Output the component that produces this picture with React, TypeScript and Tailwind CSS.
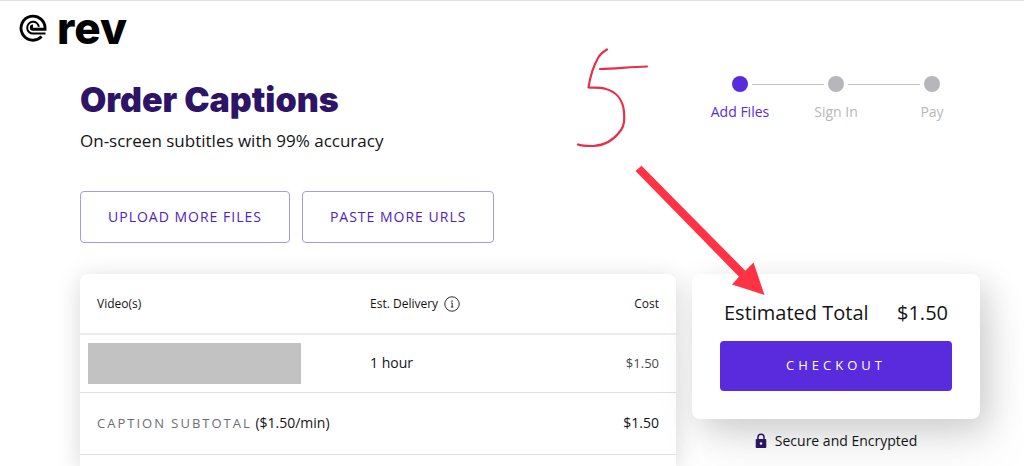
const STEPS = [
  { label: 'Add Files', active: true },
  { label: 'Sign In', active: false },
  { label: 'Pay', active: false },
];

function Logo() {
  return (
    <a href="#" className="flex items-center gap-2.5 text-black" aria-label="rev">
      <svg viewBox="0 0 28 28" className="size-7" fill="none" stroke="currentColor" aria-hidden="true">
        <path d="M22.6 22.6A12 12 0 1 1 26 15.200H13.800A1.600 1.600 0 0 1 14 12" strokeWidth="2.900" />
        <path d="M26.500 19.600H14A5.900 5.900 0 1 1 19.900 12.800" strokeWidth="2" />
      </svg>
      <span className="font-['Inter',sans-serif] text-[44px] leading-10 font-extrabold">rev</span>
    </a>
  );
}

function Stepper() {
  return (
    <ol className="grid w-72 shrink-0 grid-cols-3 pt-1">
      {STEPS.map((step, i) => (
        <li key={step.label} className={step.active ? 'text-[#5a2bdc]' : 'text-[#b7b7bb]'}>
          <div className="flex items-center gap-1">
            <span className={i === 0 ? 'h-px flex-1' : 'h-px flex-1 bg-[#c4c4c6]'} />
            <span className="size-4 rounded-full bg-current" />
            <span className={i === STEPS.length - 1 ? 'h-px flex-1' : 'h-px flex-1 bg-[#c4c4c6]'} />
          </div>
          <p className="mt-2 text-center text-sm leading-6">{step.label}</p>
        </li>
      ))}
    </ol>
  );
}

function InfoIcon() {
  return (
    <svg viewBox="0 0 16 16" className="size-4" fill="none" stroke="currentColor" aria-hidden="true">
      <circle cx="8" cy="8" r="7.2" strokeWidth="0.9" />
      <path d="M7.200 7h1v4M6.900 11h2.400" strokeWidth="0.9" />
      <path d="M8 4.500v1.300" strokeWidth="1.200" />
    </svg>
  );
}

function LockIcon() {
  return (
    <svg viewBox="0 0 12 16" className="h-4 w-3 text-[#2b1464]" aria-hidden="true">
      <path d="M3 7V4.200a3 3 0 0 1 6 0V7" fill="none" stroke="currentColor" strokeWidth="1.500" />
      <path d="M1.500 6h9a.8.8 0 0 1 .8.8v7.400a.8.8 0 0 1-.8.8h-9a.8.8 0 0 1-.8-.8V6.800a.8.8 0 0 1 .8-.8z" fill="currentColor" />
      <circle cx="6" cy="10.500" r="1.200" fill="white" />
    </svg>
  );
}

// Hand-drawn step number and the arrow to the total
function Annotation() {
  return (
    <svg
      viewBox="570 40 210 270"
      className="pointer-events-none absolute top-[39px] left-[570px] z-10 h-[270px] w-[210px]"
      fill="none"
      aria-hidden="true"
    >
      <g stroke="#e5304a" strokeWidth="2.200" strokeLinecap="round" strokeLinejoin="round">
        <path d="M607 49.500C603 52 600 54 598 58C593 67 590 77 588.500 87.500C594 88 600 87 606 89C617 92 623 101 624 112C624.500 120 624.500 125 621 130C614 140 604 145.500 593 146C587 146 581 146 578 144.500" />
        <path d="M600 69C616 68.500 630 67 647 66.500" />
      </g>
      <path d="M635.500 171L641.500 165.800L745.300 270.700L753.500 262.500L764.500 295L732 284.500L739 276.700Z" fill="#ff3344" />
    </svg>
  );
}

function OrderTable() {
  return (
    <section className="flex-1 rounded-t-lg bg-white shadow-[0_4px_24px_rgba(0,0,0,0.16)]">
      <table className="w-full table-fixed border-collapse text-left">
        <thead>
          <tr className="h-[60px] border-b-2 border-[#ececec] text-xs">
            <th className="w-[290px] pl-[17px] font-medium">Video(s)</th>
            <th className="font-medium">
              <span className="flex items-center gap-1.5">
                Est. Delivery
                <InfoIcon />
              </span>
            </th>
            <th className="pr-[17px] text-right font-medium">Cost</th>
          </tr>
        </thead>
        <tbody>
          <tr className="h-[58px] border-b border-[#e0e0e0] text-sm">
            <td className="pl-2">
              <div className="h-[41px] w-[213px] bg-[#c2c2c2]" />
            </td>
            <td>1 hour</td>
            <td className="pr-[17px] text-right text-[13px] text-[#4a4a4e]">$1.50</td>
          </tr>
          <tr className="h-[62px] border-b border-[#e0e0e0] text-sm font-medium">
            <td colSpan={2} className="pl-[17px]">
              <span className="text-[13px] font-normal tracking-[2px] text-[#6d6d73]">CAPTION SUBTOTAL</span>{' '}
              ($1.50/min)
            </td>
            <td className="pr-[17px] text-right">$1.50</td>
          </tr>
        </tbody>
      </table>
    </section>
  );
}

function Summary() {
  return (
    <aside className="w-72 shrink-0">
      <div className="rounded-lg bg-white px-7 pt-[23px] pb-7 shadow-[8px_10px_32px_rgba(0,0,0,0.16),12px_30px_60px_rgba(0,0,0,0.06)]">
        <div className="flex justify-between px-1 text-xl leading-8">
          <span>Estimated Total</span>
          <span>$1.50</span>
        </div>
        <button className="mt-3 h-[50px] w-full rounded-sm bg-[#5a2bdc] text-[13px] tracking-[4px] text-white">
          CHECKOUT
        </button>
      </div>
      <p className="mt-2 flex items-center justify-center gap-2 text-sm leading-7">
        <LockIcon />
        Secure and Encrypted
      </p>
    </aside>
  );
}

export default function App() {
  return (
    <div className="relative flex min-h-screen flex-col overflow-hidden border-t border-[#e2e2e2] bg-white font-['Open_Sans',sans-serif] text-[#141418]">
      <header className="px-[19px] pt-[7px]">
        <Logo />
      </header>

      <main className="flex flex-1 flex-col pt-6 pr-11 pl-20">
        <div className="flex justify-between">
          <div>
            <h1 className="pt-1 font-['Inter',sans-serif] text-[34px] leading-[48px] font-black text-[#2e1466]">
              Order Captions
            </h1>
            <p className="mt-[5px] text-[17px] leading-6">On-screen subtitles with 99% accuracy</p>
          </div>
          <Stepper />
        </div>

        <div className="mt-[38px] flex gap-3">
          <button className="h-[52px] rounded-sm border border-[#a99ae0] px-[27px] text-sm tracking-[1px] text-[#4f22c0]">
            UPLOAD MORE FILES
          </button>
          <button className="h-[52px] rounded-sm border border-[#a99ae0] px-[27px] text-sm tracking-[1px] text-[#4f22c0]">
            PASTE MORE URLS
          </button>
        </div>

        <div className="mt-[31px] flex flex-1 gap-4">
          <OrderTable />
          <Summary />
        </div>
      </main>

      <Annotation />
    </div>
  );
}
